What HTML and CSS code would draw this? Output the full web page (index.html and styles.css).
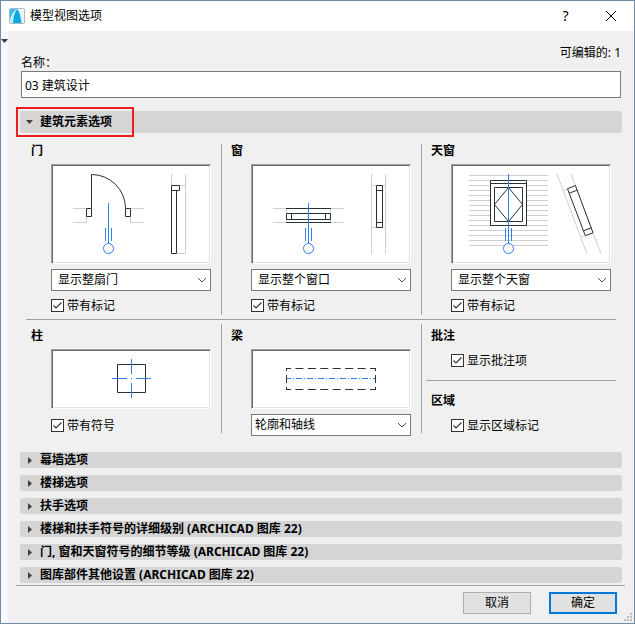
FILE: index.html
```
<!DOCTYPE html>
<html lang="zh-CN">
<head>
  <meta charset="UTF-8" />
  <meta name="viewport" content="width=device-width, initial-scale=1.0" />
  <title>模型视图选项</title>
  <link rel="stylesheet" href="styles.css">
</head>
<body>
  <div class="dialog">
    <header class="titlebar">
      <svg class="logo" width="16" height="16" viewBox="0 0 16 16">
        <rect x="0.5" y="0.5" width="15" height="15" rx="1" fill="#eef3f6" stroke="#a9bac4" />
        <path d="M1 1H8Q3 5 1 12Z" fill="#35bdea" />
        <path d="M4 15Q4 5 8 1Q11 3 12.5 15Z" fill="#08a9e6" />
        <path d="M1 15V12Q3 4 8 1Q4 7 4 15Z" fill="#c5edfa" />
      </svg>
      <h1>模型视图选项</h1>
      <button class="caption-btn" type="button">?</button>
      <button class="caption-btn" type="button" aria-label="关闭">
        <svg width="12" height="12" viewBox="0 0 12 12"><path d="M1 1L11 11M11 1L1 11" stroke="#000" fill="none" /></svg>
      </button>
    </header>

    <div class="client">
      <div class="gutter">
        <svg width="7" height="4" viewBox="0 0 7 4"><path d="M0 0H7L3.5 4Z" fill="#3c3c3c" /></svg>
      </div>

      <form class="panel">
        <div class="name-row">
          <label for="name">名称：</label>
          <span class="editable">可编辑的: 1</span>
        </div>
        <input class="name-input" type="text" id="name" value="03 建筑设计" />

        <details class="section main-section" open>
          <summary><svg class="arrow" width="7" height="4" viewBox="0 0 7 4"><path d="M0 0H7L3.5 4Z" /></svg>建筑元素选项</summary>

          <div class="options">
            <section class="cell">
              <h2>门</h2>
              <div class="preview">
                <svg width="158" height="98" viewBox="0 0 158 98">
                  <path class="wall" d="M21 43.5H34M21 57.5H34.5V52M79 43.5H92M92 57.5H78.5V52M119.5 9V20M133.5 9V88.5H125M120 20.5H133" />
                  <path class="line" d="M39.5 43V9.5A34 34 0 0 1 73.5 43M34.5 43.5H39.5V51.5H34.5ZM73.5 43.5H78.5V51.5H73.5ZM119.5 20.5H127.5V25.5H119.5ZM119.5 25.5H124.5V88.5H119.5Z" />
                  <path class="marker" d="M56.5 38V78M53.5 63V76M59.5 63V76" />
                  <circle class="marker" cx="56.5" cy="83.5" r="5" />
                </svg>
              </div>
              <div class="combo">
                <select aria-label="门"><option>显示整扇门</option></select>
                <svg width="10" height="6" viewBox="0 0 10 6"><path d="M1 1L5 5L9 1" /></svg>
              </div>
              <label class="check"><input type="checkbox" checked />带有标记</label>
            </section>

            <section class="cell">
              <h2>窗</h2>
              <div class="preview">
                <svg width="158" height="98" viewBox="0 0 158 98">
                  <path class="wall" d="M21 43.5H92M21 57.5H92M34.5 44V57M78.5 44V57M119.5 9V89M133.5 9V89M120 20.5H133M120 62.5H133" />
                  <path class="line" d="M34 43.5H79M34 57.5H79M34.5 48.5H78.5V54.5H34.5ZM39.5 48.5V54.5M73.5 48.5V54.5" />
                  <path class="line solid" d="M124.5 20.5H130.5V62.5H124.5ZM124.5 25.5H130.5M124.5 57.5H130.5" />
                  <path class="marker" d="M56.5 38V78M53.5 63V76M59.5 63V76" />
                  <circle class="marker" cx="56.5" cy="83.5" r="5" />
                </svg>
              </div>
              <div class="combo">
                <select aria-label="窗"><option>显示整个窗口</option></select>
                <svg width="10" height="6" viewBox="0 0 10 6"><path d="M1 1L5 5L9 1" /></svg>
              </div>
              <label class="check"><input type="checkbox" checked />带有标记</label>
            </section>

            <section class="cell">
              <h2>天窗</h2>
              <div class="preview">
                <svg width="158" height="98" viewBox="0 0 158 98">
                  <path class="wall" d="M17 10.5H96M17 15.5H96M17 20.5H96M17 25.5H96M17 30.5H96M17 35.5H96M17 40.5H96M17 45.5H96M17 50.5H96M17 55.5H96M17 60.5H96M17 65.5H96M17 70.5H96M17 75.5H96M17 80.5H96" />
                  <path class="wall" d="M105 9L135 89M119 9L149 89M111.5 25.5L115.5 24M129.5 72L133.5 70.5" />
                  <path class="line solid" d="M38.5 15.5H74.5V60.5H38.5Z" />
                  <path class="line" d="M38.5 18.5H74.5M42.5 22.5H70.5V56.5H42.5ZM56.5 22.5L70.5 39.5L56.5 56.5L42.5 39.5Z" />
                  <path class="line solid" d="M115.5 23.8L123.4 20.5L141 67.8L133.3 70.7Z" />
                  <path class="line" d="M117.2 28.2L125.1 25.2M131.5 65.8L139.3 62.8" />
                  <path class="marker" d="M56.5 9V78M53.5 63V76M59.5 63V76" />
                  <circle class="marker solid" cx="56.5" cy="83.5" r="5" />
                </svg>
              </div>
              <div class="combo">
                <select aria-label="天窗"><option>显示整个天窗</option></select>
                <svg width="10" height="6" viewBox="0 0 10 6"><path d="M1 1L5 5L9 1" /></svg>
              </div>
              <label class="check"><input type="checkbox" checked />带有标记</label>
            </section>
          </div>

          <hr />

          <div class="options lower">
            <section class="cell">
              <h2>柱</h2>
              <div class="preview short">
                <svg width="158" height="58" viewBox="0 0 158 58">
                  <path class="line" d="M65.5 14.5H93.5V42.5H65.5Z" />
                  <path class="marker" d="M79.5 9V24M79.5 33V48M60 28.5H75M84 28.5H99M79 28.5H80" />
                </svg>
              </div>
              <label class="check spaced"><input type="checkbox" checked />带有符号</label>
            </section>

            <section class="cell">
              <h2>梁</h2>
              <div class="preview short">
                <svg width="158" height="58" viewBox="0 0 158 58">
                  <path class="marker" stroke-dasharray="6 2 1 2" stroke-dashoffset="2" d="M35 28.5H123" />
                  <path class="line" stroke-dasharray="8 4.43" stroke-dashoffset="3" d="M34 18.5H124M34 39.5H124" />
                  <path class="line" d="M34.5 18V21M34.5 25V33M34.5 37V40M123.5 18V21M123.5 25V33M123.5 37V40" />
                </svg>
              </div>
              <div class="combo flush">
                <select aria-label="梁"><option>轮廓和轴线</option></select>
                <svg width="10" height="6" viewBox="0 0 10 6"><path d="M1 1L5 5L9 1" /></svg>
              </div>
            </section>

            <div class="cell">
              <section>
                <h2>批注</h2>
                <label class="check notes"><input type="checkbox" checked />显示批注项</label>
              </section>
              <hr />
              <section>
                <h2>区域</h2>
                <label class="check notes"><input type="checkbox" checked />显示区域标记</label>
              </section>
            </div>
          </div>
        </details>

        <div class="collapsed">
          <details class="section">
            <summary><svg class="arrow" width="4" height="7" viewBox="0 0 4 7"><path d="M0 0L4 3.5L0 7Z" /></svg>幕墙选项</summary>
          </details>
          <details class="section">
            <summary><svg class="arrow" width="4" height="7" viewBox="0 0 4 7"><path d="M0 0L4 3.5L0 7Z" /></svg>楼梯选项</summary>
          </details>
          <details class="section">
            <summary><svg class="arrow" width="4" height="7" viewBox="0 0 4 7"><path d="M0 0L4 3.5L0 7Z" /></svg>扶手选项</summary>
          </details>
          <details class="section">
            <summary><svg class="arrow" width="4" height="7" viewBox="0 0 4 7"><path d="M0 0L4 3.5L0 7Z" /></svg>楼梯和扶手符号的详细级别 (ARCHICAD 图库 22)</summary>
          </details>
          <details class="section">
            <summary><svg class="arrow" width="4" height="7" viewBox="0 0 4 7"><path d="M0 0L4 3.5L0 7Z" /></svg>门, 窗和天窗符号的细节等级 (ARCHICAD 图库 22)</summary>
          </details>
          <details class="section">
            <summary><svg class="arrow" width="4" height="7" viewBox="0 0 4 7"><path d="M0 0L4 3.5L0 7Z" /></svg>图库部件其他设置 (ARCHICAD 图库 22)</summary>
          </details>
        </div>

        <footer class="actions">
          <button class="btn" type="button">取消</button>
          <button class="btn primary" type="button">确定</button>
        </footer>
      </form>
    </div>

    <svg class="grip" width="8" height="8" viewBox="0 0 8 8">
      <path d="M6 0h2v2h-2zM3 3h2v2h-2zM6 3h2v2h-2zM0 6h2v2h-2zM3 6h2v2h-2zM6 6h2v2h-2z" fill="#bcbcbc" />
    </svg>
  </div>
</body>
</html>
```
FILE: styles.css
```
*,
*::after {
  box-sizing: border-box;
}

body {
  margin: 0;
  font-family: "Noto Sans", "Noto Sans CJK SC", sans-serif;
  font-size: 12px;
  line-height: 16px;
  color: #000;
  background: #f0f0f0;
}

input,
select,
button {
  font: inherit;
  color: inherit;
}

svg {
  display: block;
}

h1,
h2 {
  margin: 0;
  font-size: 12px;
}

hr {
  height: 1px;
  margin: 4px 5px;
  border: 0;
  background: #a0a0a0;
}

.dialog {
  position: relative;
  display: flex;
  flex-direction: column;
  min-height: 100vh;
  border: 1px solid #6f8dab;
}

/* title bar */
.titlebar {
  display: flex;
  align-items: center;
  height: 30px;
  padding: 0 1px 0 8px;
  background: #fff;
}

.titlebar h1 {
  flex: 1;
  margin-left: 5px;
  font-weight: 400;
}

.caption-btn {
  display: flex;
  align-items: center;
  justify-content: center;
  width: 45px;
  height: 28px;
  padding: 0;
  border: 0;
  background: none;
  font-size: 14px;
}

.client {
  flex: 1;
  display: flex;
}

.gutter {
  width: 7px;
  padding-top: 8px;
  background: #f8f8f8;
}

.panel {
  flex: 1;
  padding: 14px 13px 9px;
}

/* name */
.name-row {
  display: flex;
  align-items: flex-end;
  justify-content: space-between;
  height: 26px;
}

.editable {
  align-self: flex-start;
}

.name-input {
  display: block;
  width: 100%;
  height: 27px;
  padding: 0 3px;
  border: 1px solid #7a7a7a;
  border-radius: 0;
  background: #fff;
}

/* collapsible sections */
.section summary {
  display: flex;
  align-items: center;
  height: 16px;
  margin: 0 -1px;
  padding-left: 8px;
  border-radius: 3px;
  background: #d5d5d5;
  font-weight: 700;
  list-style: none;
}

.arrow {
  margin-right: 8px;
  fill: #404040;
}

.main-section {
  position: relative;
  margin-top: 13px;
}

.main-section summary {
  height: 22px;
  padding-left: 6px;
}

.main-section .arrow {
  margin-right: 7px;
}

.main-section summary::after {
  content: "";
  position: absolute;
  top: -4px;
  left: -5px;
  width: 118px;
  height: 30px;
  border: 2px solid #ee1c1c;
}

.collapsed {
  display: flex;
  flex-direction: column;
  gap: 7px;
  margin-top: 16px;
}

/* element options */
.options {
  display: grid;
  grid-template-columns: repeat(3, 1fr);
  margin-top: 11px;
}

.options.lower {
  margin-top: 0;
}

.cell {
  padding-bottom: 3px;
}

.cell + .cell {
  background: linear-gradient(#a0a0a0, #a0a0a0) no-repeat 0 0 / 1px 100%;
}

.lower .cell {
  padding: 5px 0 0;
}

.lower .cell + .cell {
  background-size: 1px calc(100% - 3px);
}

.cell h2 {
  margin-left: 10px;
  line-height: 14px;
}

.cell hr {
  margin: 13px 5px;
}

.preview {
  display: flex;
  justify-content: center;
  height: 100px;
  margin: 6px 10px 5px 30px;
  border: 1px solid;
  border-color: #a0a0a0 #fff #fff #a0a0a0;
  background: #fff;
  box-shadow: inset 1px 1px #696969, inset -1px -1px #e3e3e3;
}

.preview.short {
  height: 60px;
}

.wall,
.line,
.marker {
  fill: none;
}

.wall {
  stroke: #cfcfcf;
}

.line {
  stroke: #263238;
}

.marker {
  stroke: #2f80f5;
}

.solid {
  fill: #fff;
}

.combo {
  display: grid;
  align-items: center;
  margin: 0 10px 8px 30px;
}

.combo select,
.combo svg {
  grid-area: 1 / 1;
}

.combo select {
  width: 100%;
  height: 22px;
  padding: 0 20px 0 6px;
  border: 1px solid #7a7a7a;
  border-radius: 0;
  background: #fff;
  appearance: none;
}

.combo svg {
  justify-self: end;
  margin-right: 4px;
  fill: none;
  stroke: #505050;
  pointer-events: none;
}

.combo.flush {
  margin-bottom: 0;
}

.combo.flush select {
  padding-left: 3px;
}

.check {
  display: flex;
  align-items: center;
  gap: 3px;
  height: 13px;
  margin-left: 30px;
}

.check.spaced {
  margin-top: 10px;
}

.check.notes {
  margin-top: 11px;
}

.check input {
  width: 13px;
  height: 13px;
  margin: 0;
  border: 1px solid #333;
  background: #fff url("data:image/svg+xml,%3Csvg xmlns='http://www.w3.org/2000/svg' width='11' height='11'%3E%3Cpath d='M1.5 5.5L4 8L9.5 2.5' fill='none' stroke='%23333' stroke-width='1.2'/%3E%3C/svg%3E") no-repeat center;
  appearance: none;
}

/* footer */
.actions {
  display: flex;
  justify-content: flex-end;
  gap: 18px;
  margin: 2px -4px 0 -5px;
  padding: 6px 8px 0 0;
  border-top: 1px solid #a0a0a0;
}

.btn {
  width: 68px;
  height: 22px;
  padding: 0;
  border: 1px solid #adadad;
  background: #e1e1e1;
  line-height: 18px;
}

.btn.primary {
  border: 2px solid #0078d7;
}

.grip {
  position: absolute;
  right: 2px;
  bottom: 2px;
}
```
